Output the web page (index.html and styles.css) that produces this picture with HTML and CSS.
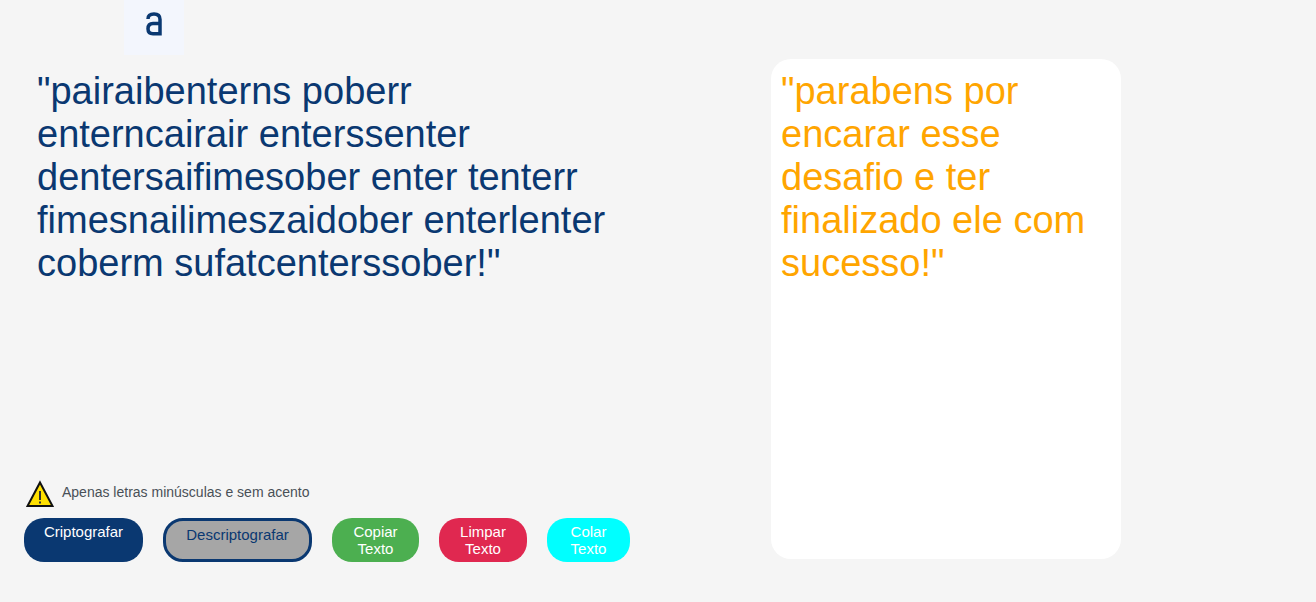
FILE: index.html
```html
<!DOCTYPE html>
<html lang="pt-BR">
<head>
    <meta charset="UTF-8">
    <meta name="viewport" content="width=device-width, initial-scale=1.0">
    <title>Decodificador de Texto</title>
    <link rel="stylesheet" href="styles.css">
</head>
<body>
    <main class="page">
        <section class="input-area">
            <div class="logo">
                <svg width="16" height="24" viewBox="0 0 16 24" aria-label="Logo">
                    <path d="M2 7 C2 3.500 4.500 2 8 2 C11.500 2 14 3.500 14 7.500 V23.500 M14 11.500 H7 C3.500 11.500 2 13.500 2 16.800 C2 20 3.500 21.800 7 21.800 H14" fill="none" stroke="#0a3871" stroke-width="3.500"/>
                </svg>
            </div>
            <p class="input-text">"pairaibenterns poberr enterncairair enterssenter dentersaifimesober enter tenterr fimesnailimeszaidober enterlenter coberm sufatcenterssober!"</p>
            <div class="warning">
                <svg width="28" height="27" viewBox="0 0 28 27">
                    <polygon points="14,2.500 26.500,26 1.500,26" fill="#ffe000" stroke="#111" stroke-width="2"/>
                    <rect x="13" y="11" width="2" height="9" fill="#333"/>
                    <rect x="13" y="21.500" width="2" height="2" fill="#333"/>
                </svg>
                <span>Apenas letras minúsculas e sem acento</span>
            </div>
            <div class="buttons">
                <button class="btn btn-encrypt">Criptografar</button>
                <button class="btn btn-decrypt">Descriptografar</button>
                <button class="btn btn-copy">Copiar Texto</button>
                <button class="btn btn-clear">Limpar Texto</button>
                <button class="btn btn-paste">Colar Texto</button>
            </div>
        </section>
        <aside class="output-card">
            <p class="output-text">"parabens por encarar esse desafio e ter finalizado ele com sucesso!"</p>
        </aside>
    </main>
</body>
</html>
```

FILE: styles.css
```css
body {
    margin: 0;
    height: 602px;
    overflow: hidden;
    background-color: #f5f5f5;
    font-family: "Liberation Sans", Arial, sans-serif;
}

.page {
    display: flex;
    height: 602px;
}

.input-area {
    width: 771px;
    padding-left: 24px;
    box-sizing: border-box;
    display: flex;
    flex-direction: column;
}

.logo {
    width: 60px;
    height: 55px;
    margin-left: 100px;
    padding-top: 12px;
    box-sizing: border-box;
    background-color: #f3f6fd;
    display: flex;
    justify-content: center;
    align-items: flex-start;
}

.input-text {
    width: 590px;
    margin: 15px 0 0 13px;
    height: 410px;
    font-size: 38px;
    line-height: 43px;
    color: #0a3871;
}

.warning {
    display: flex;
    align-items: flex-start;
    gap: 8px;
    height: 27px;
    margin-left: 2px;
    font-size: 14px;
    color: #495057;
}

.warning span {
    margin-top: 4px;
}

.buttons {
    display: flex;
    gap: 20px;
    margin-top: 11px;
}

.btn {
    height: 44px;
    padding: 5px 20px 5px;
    border: none;
    border-radius: 20px;
    font-family: inherit;
    font-size: 15px;
    line-height: 17px;
    color: #fff;
}

.btn-encrypt {
    width: 119px;
    padding: 5px 0 22px;
    background-color: #0a3871;
}

.btn-decrypt {
    width: 149px;
    padding: 5px 0 16px;
    background-color: #a6a6a6;
    border: 3px solid #0a3871;
    color: #0a3871;
}

.btn-copy {
    width: 87px;
    background-color: #4caf50;
}

.btn-clear {
    width: 88px;
    background-color: #e02850;
}

.btn-paste {
    width: 83px;
    background-color: #00ffff;
}

.output-card {
    width: 350px;
    height: 500px;
    margin-top: 59px;
    background-color: #fff;
    border-radius: 20px;
    box-sizing: border-box;
    padding: 11px 10px 10px;
}

.output-text {
    margin: 0;
    font-size: 38px;
    line-height: 43px;
    color: #ffa500;
}
```
